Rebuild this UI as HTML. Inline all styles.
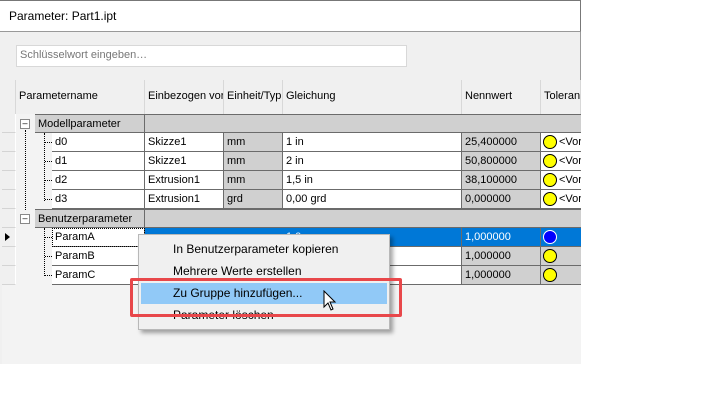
<html><head><style>
body{margin:0;width:720px;height:416px;background:#fff;font-family:"Liberation Sans",sans-serif;font-size:11px;color:#000;position:relative;overflow:hidden}
div{position:absolute;box-sizing:border-box}
.c{border-right:1px solid #6b6b6b;border-bottom:1px solid #6b6b6b;padding-left:3px;line-height:18px;white-space:nowrap;overflow:hidden}
.w{background:#fff}.g{background:#d0d0d0}
.h{background:#f0f0f0;border-right:1px solid #d8d8d8;line-height:33px;padding-left:3px;white-space:nowrap;overflow:hidden}
.y{width:14px;height:14px;border-radius:50%;background:#ff0;border:1px solid #000;top:2px;left:2px}
.m{left:34px;font-size:12px;color:#000}
.rh{left:2px;width:14px;height:19px;background:#f0f0f0;border-right:1px solid #fff;border-bottom:1px solid #d4d4d4}
</style></head><body>
<div style="left:0;top:0;width:581px;height:32px;border-top:1px solid #777;border-bottom:1px solid #999;border-right:1px solid #777;background:#fff;padding:8px 0 0 9px;font-size:12px">Parameter: Part1.ipt</div>
<div style="left:0;top:32px;width:581px;height:332px;background:#f0f0f0;border-right:1px solid #999"></div>
<div style="left:16px;top:45px;width:391px;height:22px;background:#fff;border:1px solid #d8d8d8;color:#777;padding:3px 3px;font-size:11px">Schlüsselwort eingeben…</div>
<div style="left:2px;top:114px;width:579px;height:250px;background:#f3f3f3"></div>
<div class="h" style="left:2px;top:80px;width:14px;height:34px"></div>
<div class="h" style="left:16px;top:80px;width:129px;height:34px">Parametername</div>
<div class="h" style="left:145px;top:80px;width:79px;height:34px">Einbezogen vor</div>
<div class="h" style="left:224px;top:80px;width:59px;height:34px">Einheit/Typ</div>
<div class="h" style="left:283px;top:80px;width:179px;height:34px">Gleichung</div>
<div class="h" style="left:462px;top:80px;width:79px;height:34px">Nennwert</div>
<div class="h" style="left:541px;top:80px;width:40px;height:34px">Toleran</div>
<div class="rh" style="top:114px"></div><div class="rh" style="top:133px"></div><div class="rh" style="top:152px"></div><div class="rh" style="top:171px"></div><div class="rh" style="top:190px"></div><div class="rh" style="top:209px"></div><div class="rh" style="top:228px"></div><div class="rh" style="top:247px"></div><div class="rh" style="top:266px"></div>

<div class="c g" style="left:35px;top:114px;width:110px;height:19px;border-top:1px solid #6b6b6b">Modellparameter</div>
<div class="c g" style="left:145px;top:114px;width:436px;height:19px;border-top:1px solid #6b6b6b;border-right:none"></div>
<div class="c g" style="left:35px;top:209px;width:110px;height:19px;border-top:1px solid #6b6b6b">Benutzerparameter</div>
<div class="c g" style="left:145px;top:209px;width:436px;height:19px;border-top:1px solid #6b6b6b;border-right:none"></div>
<div style="left:20px;top:119px;width:10px;height:10px;border:1px solid #888;background:#fff;font-size:9px;line-height:7px;text-align:center">–</div>
<div style="left:20px;top:214px;width:10px;height:10px;border:1px solid #888;background:#fff;font-size:9px;line-height:7px;text-align:center">–</div>
<div style="left:25px;top:130px;height:80px;border-left:1px dotted #000"></div>
<div style="left:44px;top:133px;height:68px;border-left:1px dotted #000"></div>
<div style="left:44px;top:228px;height:48px;border-left:1px dotted #000"></div>

<div style="left:0;top:133px;width:581px">
<div style="top:0;left:0;width:581px;height:19px">
<div style="left:45px;top:9px;width:7px;border-top:1px dotted #000"></div>
<div class="c w" style="left:52px;width:93px;height:19px">d0</div><div class="c w" style="left:145px;width:79px;height:19px">Skizze1</div><div class="c g" style="left:224px;width:59px;height:19px">mm</div><div class="c w" style="left:283px;width:179px;height:19px">1 in</div><div class="c g" style="left:462px;width:79px;height:19px">25,400000</div><div class="c w" style="left:541px;width:40px;height:19px;border-right:none;padding-left:18px">&lt;Vor<div class="y"></div></div></div>
<div style="top:19px;left:0;width:581px;height:19px">
<div style="left:45px;top:9px;width:7px;border-top:1px dotted #000"></div>
<div class="c w" style="left:52px;width:93px;height:19px">d1</div><div class="c w" style="left:145px;width:79px;height:19px">Skizze1</div><div class="c g" style="left:224px;width:59px;height:19px">mm</div><div class="c w" style="left:283px;width:179px;height:19px">2 in</div><div class="c g" style="left:462px;width:79px;height:19px">50,800000</div><div class="c w" style="left:541px;width:40px;height:19px;border-right:none;padding-left:18px">&lt;Vor<div class="y"></div></div></div>
<div style="top:38px;left:0;width:581px;height:19px">
<div style="left:45px;top:9px;width:7px;border-top:1px dotted #000"></div>
<div class="c w" style="left:52px;width:93px;height:19px">d2</div><div class="c w" style="left:145px;width:79px;height:19px">Extrusion1</div><div class="c g" style="left:224px;width:59px;height:19px">mm</div><div class="c w" style="left:283px;width:179px;height:19px">1,5 in</div><div class="c g" style="left:462px;width:79px;height:19px">38,100000</div><div class="c w" style="left:541px;width:40px;height:19px;border-right:none;padding-left:18px">&lt;Vor<div class="y"></div></div></div>
<div style="top:57px;left:0;width:581px;height:19px">
<div style="left:45px;top:9px;width:7px;border-top:1px dotted #000"></div>
<div class="c w" style="left:52px;width:93px;height:19px">d3</div><div class="c w" style="left:145px;width:79px;height:19px">Extrusion1</div><div class="c g" style="left:224px;width:59px;height:19px">grd</div><div class="c w" style="left:283px;width:179px;height:19px">0,00 grd</div><div class="c g" style="left:462px;width:79px;height:19px">0,000000</div><div class="c w" style="left:541px;width:40px;height:19px;border-right:none;padding-left:18px">&lt;Vor<div class="y"></div></div></div>
</div>

<div style="left:0;top:228px;width:581px">
<div style="top:0;left:0;width:581px;height:19px">
<div style="left:5px;top:5px;width:0;height:0;border-left:5px solid #000;border-top:4px solid transparent;border-bottom:4px solid transparent"></div>
<div style="left:45px;top:9px;width:7px;border-top:1px dotted #000"></div>
<div class="c w" style="left:52px;width:93px;height:19px;outline:1px dotted #000;outline-offset:-1px">ParamA</div><div class="c" style="left:145px;width:317px;height:19px;background:#0078d7;color:#fff;padding-left:141px">1,0</div><div class="c" style="left:462px;width:79px;height:19px;background:#0078d7;color:#fff">1,000000</div><div class="c" style="left:541px;width:40px;height:19px;border-right:none;background:#0078d7"><div class="y" style="background:#00f;border-color:#fff"></div></div></div>
<div style="top:19px;left:0;width:581px;height:19px">
<div style="left:45px;top:9px;width:7px;border-top:1px dotted #000"></div>
<div class="c w" style="left:52px;width:93px;height:19px">ParamB</div><div class="c w" style="left:145px;width:317px;height:19px"></div><div class="c g" style="left:462px;width:79px;height:19px">1,000000</div><div class="c g" style="left:541px;width:40px;height:19px;border-right:none"><div class="y"></div></div></div>
<div style="top:38px;left:0;width:581px;height:19px">
<div style="left:45px;top:9px;width:7px;border-top:1px dotted #000"></div>
<div class="c w" style="left:52px;width:93px;height:19px">ParamC</div><div class="c w" style="left:145px;width:317px;height:19px"></div><div class="c g" style="left:462px;width:79px;height:19px">1,000000</div><div class="c g" style="left:541px;width:40px;height:19px;border-right:none"><div class="y"></div></div></div>
</div>

<div style="left:138px;top:234px;width:252px;height:96px;background:#f0f0f0;border:1px solid #b8b8b8;box-shadow:3px 3px 4px rgba(0,0,0,.35)">
<div class="m" style="top:7px">In Benutzerparameter kopieren</div>
<div class="m" style="top:29px">Mehrere Werte erstellen</div>
<div style="left:2px;top:48px;width:246px;height:21px;background:#91c9f7"></div>
<div class="m" style="top:51px">Zu Gruppe hinzufügen...</div>
<div class="m" style="top:73px">Parameter löschen</div>
</div>
<div style="left:130px;top:278px;width:272px;height:39px;border:3px solid #e8474a;border-radius:2px"></div>
<svg style="position:absolute;left:323px;top:290px" width="14" height="22" viewBox="0 0 14 22"><path d="M1 1 L1 17 L5 13 L8 20 L10 19 L7 12 L12 12 Z" fill="#fff" stroke="#000" stroke-width="1"/></svg>
</body></html>
